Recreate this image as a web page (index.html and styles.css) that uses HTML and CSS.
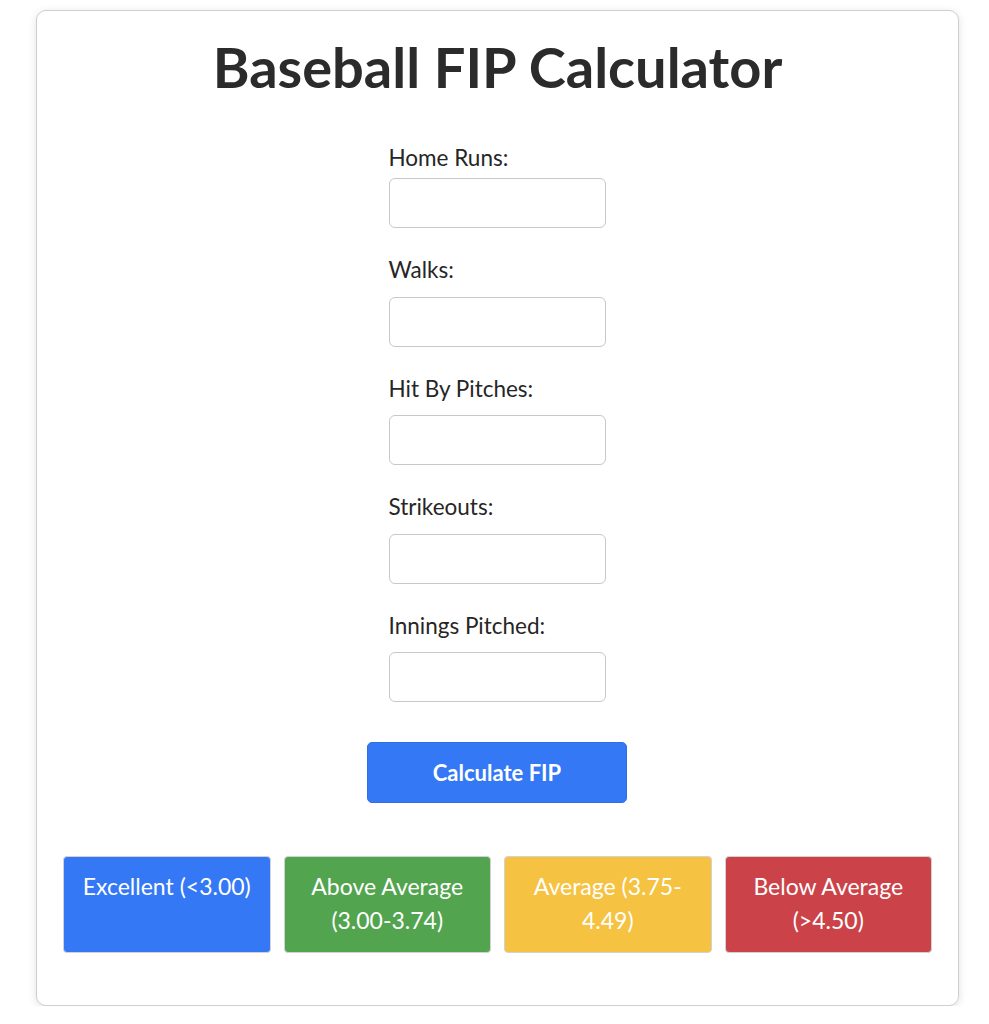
FILE: index.html
```html
<!DOCTYPE html>
<html>
<head>
<meta charset="utf-8">
<link rel="stylesheet" href="styles.css">
<title>Baseball FIP Calculator</title>
</head>
<body>
<div class="card">
  <h1 class="title">Baseball FIP Calculator</h1>
  <form class="form">
    <div class="field">
      <label class="label">Home Runs:</label>
      <input class="input" type="text">
    </div>
    <div class="field">
      <label class="label">Walks:</label>
      <input class="input" type="text">
    </div>
    <div class="field">
      <label class="label">Hit By Pitches:</label>
      <input class="input" type="text">
    </div>
    <div class="field">
      <label class="label">Strikeouts:</label>
      <input class="input" type="text">
    </div>
    <div class="field">
      <label class="label">Innings Pitched:</label>
      <input class="input" type="text">
    </div>
    <button class="btn" type="button">Calculate FIP</button>
  </form>
  <div class="legend">
    <div class="tier tier-excellent">Excellent (&lt;3.00)</div>
    <div class="tier tier-above">Above Average (3.00-3.74)</div>
    <div class="tier tier-average">Average (3.75-<wbr>4.49)</div>
    <div class="tier tier-below">Below Average (&gt;4.50)</div>
  </div>
</div>
</body>
</html>
```

FILE: styles.css
```css
* { box-sizing: border-box; }
html, body { margin: 0; padding: 0; background: #fff; }
body {
  font-family: "Lato", "Open Sans", sans-serif;
  color: #262626;
  padding: 10px 0 0 36px;
}
.card {
  width: 923px;
  height: 996px;
  border: 1px solid #cfcfcf;
  border-radius: 10px;
  box-shadow: 0 2px 8px rgba(0,0,0,0.12);
  padding: 23px 26px 0;
  background: #fff;
}
.title {
  margin: 0;
  text-align: center;
  font-size: 56px;
  font-weight: 700;
  line-height: 66px;
  color: #2b2b2b;
}
.form {
  display: flex;
  flex-direction: column;
  align-items: center;
  margin-top: 44px;
}
.field {
  display: flex;
  flex-direction: column;
  width: 217px;
  margin-left: -1px;
  margin-bottom: 28px;
}
.label {
  font-size: 22.5px;
  line-height: 28px;
  color: #262626;
  margin-bottom: 12.5px;
}
.field:first-child .label {
  margin-bottom: 6px;
}
.input {
  width: 217px;
  height: 50px;
  border: 1px solid #c8c8c8;
  border-radius: 6px;
  background: #fff;
  font: inherit;
}
.btn {
  width: 260px;
  height: 61px;
  background: #3578f6;
  color: #fff;
  border: 1px solid #2f6fe6;
  border-radius: 5px;
  font-family: inherit;
  font-size: 22px;
  font-weight: 700;
  margin-top: 12px;
  margin-left: -1px;
}
.legend {
  display: grid;
  grid-template-columns: repeat(4, 1fr);
  column-gap: 13px;
  margin-top: 53px;
}
.tier {
  height: 97px;
  border: 1px solid #d2d2d2;
  border-radius: 4px;
  color: #fff;
  font-size: 23px;
  line-height: 34px;
  text-align: center;
  padding: 12px 10px;
}
.tier-excellent { background: #3478f6; }
.tier-above { background: #52a44f; }
.tier-average { background: #f5c242; }
.tier-below { background: #cb4349; }
```
